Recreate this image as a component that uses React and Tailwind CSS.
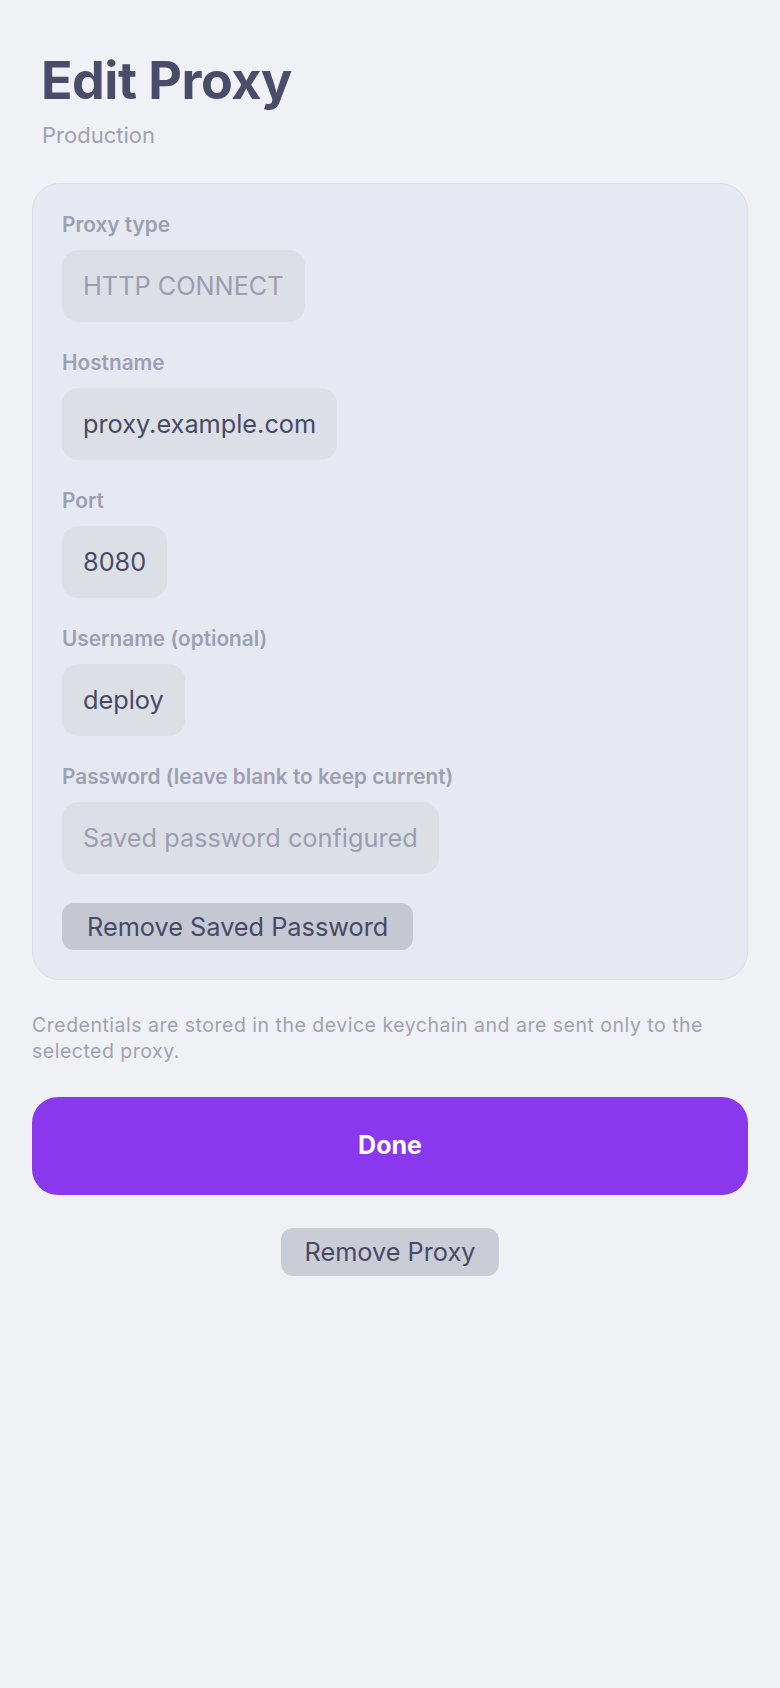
import React from "react";

const fields = [
  { label: "Proxy type", value: "HTTP CONNECT", muted: true },
  { label: "Hostname", value: "proxy.example.com" },
  { label: "Port", value: "8080" },
  { label: "Username (optional)", value: "deploy" },
  { label: "Password (leave blank to keep current)", value: "Saved password configured", muted: true },
];

const Field = ({ label, value, muted }) => (
  <div className="flex flex-col items-start">
    <label className="text-[20.8px] leading-[24px] font-semibold text-[#9d9fb2]">{label}</label>
    <div
      className={
        "mt-[13px] h-[72px] inline-flex items-center px-[21px] rounded-[16px] bg-[#dddfe7] text-[25.3px] " +
        (muted ? "text-[#9b9db0]" : "text-[#474a66]")
      }
    >
      {value}
    </div>
  </div>
);

const App = () => {
  return (
    <div className="min-h-[1688px] w-full bg-[#eff1f5] font-['Inter','Noto_Sans',sans-serif] px-[32px] pt-[49px]">
      <h1 className="pl-[9px] text-[52px] leading-[63px] font-bold text-[#4a4c69] tracking-[-0.5px]">
        Edit Proxy
      </h1>
      <p className="pl-[10px] mt-[10px] text-[22px] leading-[27px] text-[#9fa1b4]">Production</p>

      <div className="mt-[34px] rounded-[28px] border border-[#dadde5] bg-[#e6e9f1] px-[29px] pt-[29px] pb-[29px]">
        <div className="flex flex-col gap-[29px]">
          {fields.map((f) => (
            <Field key={f.label} {...f} />
          ))}
          <div>
            <button className="h-[47px] px-[25px] rounded-[12px] bg-[#c5c7d3] text-[25.3px] text-[#474a66]">
              Remove Saved Password
            </button>
          </div>
        </div>
      </div>

      <p className="mt-[32px] text-[19.5px] leading-[26px] tracking-[0.5px] text-[#a0a2b4]">
        Credentials are stored in the device keychain and are sent only to the selected proxy.
      </p>

      <button className="mt-[33px] w-full h-[98px] rounded-[26px] bg-[#8a38ee] text-white text-[25px] font-bold">
        Done
      </button>

      <div className="mt-[33px] flex justify-center">
        <button className="h-[48px] px-[24px] rounded-[12px] bg-[#cbcdd6] text-[25.3px] text-[#474a66]">
          Remove Proxy
        </button>
      </div>
    </div>
  );
};

export default App;
